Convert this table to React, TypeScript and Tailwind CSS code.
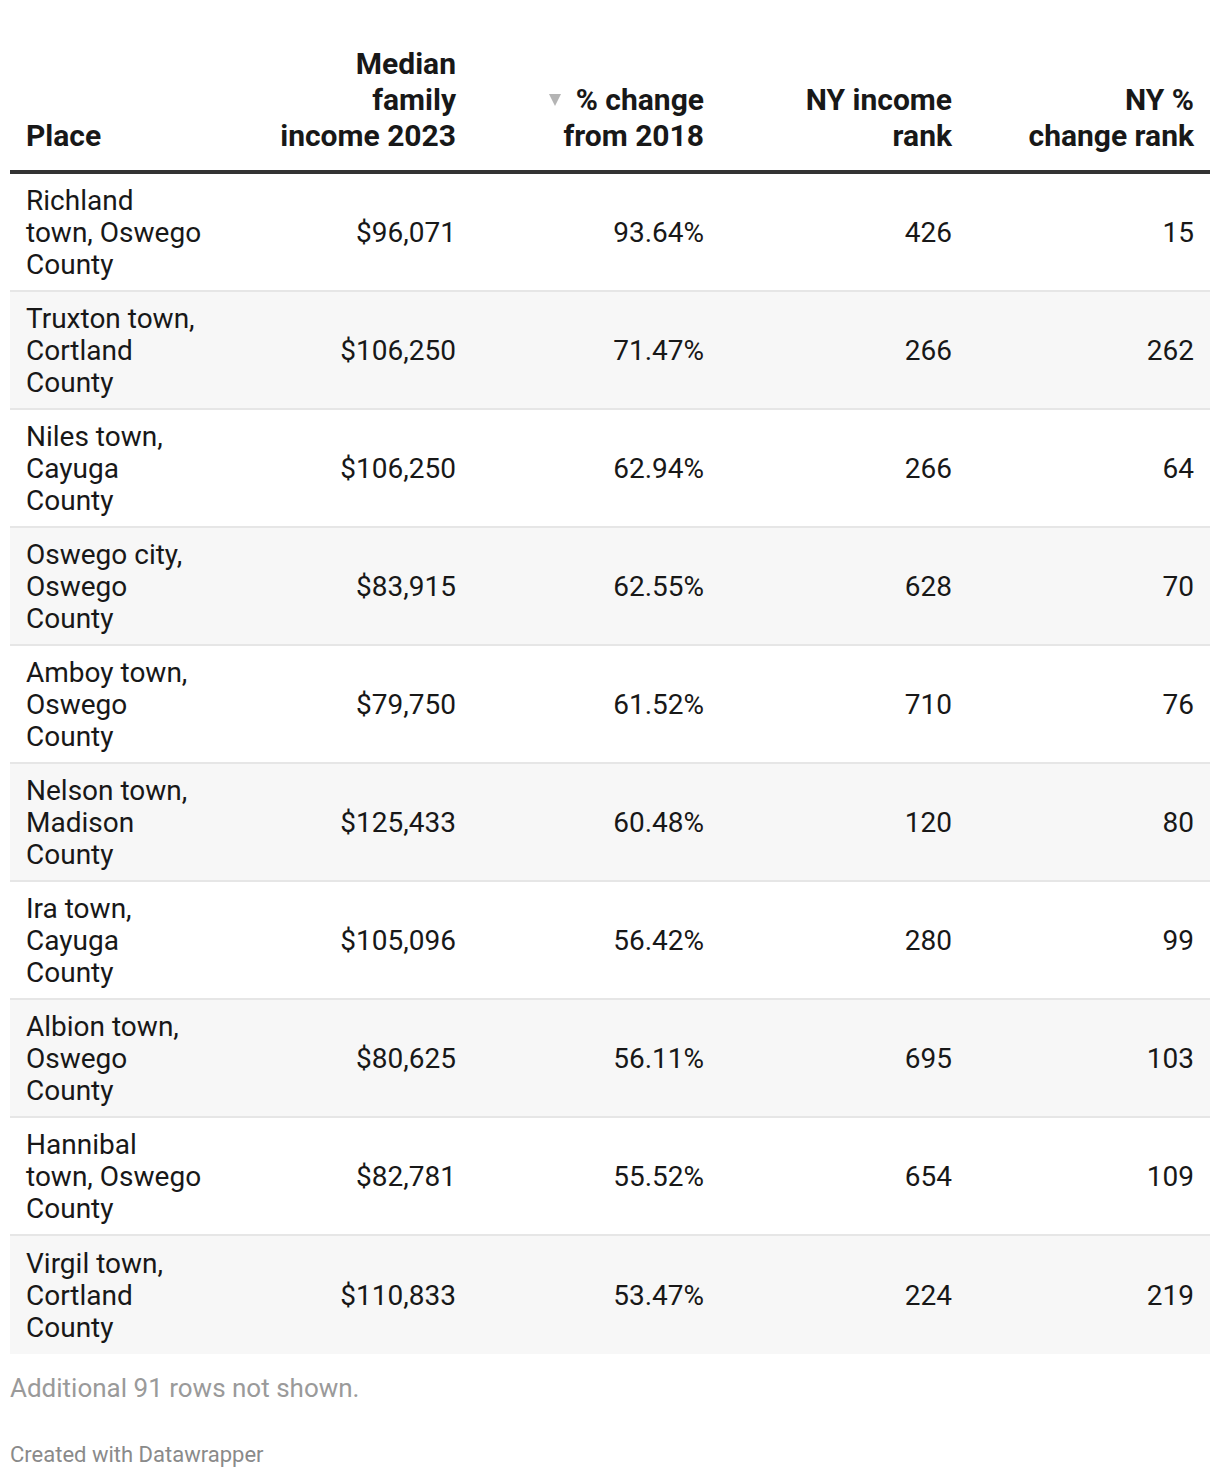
import React from "react";

const rows: { place: string[]; income: string; change: string; rank: string; crank: string }[] = [
  { place: ["Richland", "town, Oswego", "County"], income: "$96,071", change: "93.64%", rank: "426", crank: "15" },
  { place: ["Truxton town,", "Cortland", "County"], income: "$106,250", change: "71.47%", rank: "266", crank: "262" },
  { place: ["Niles town,", "Cayuga", "County"], income: "$106,250", change: "62.94%", rank: "266", crank: "64" },
  { place: ["Oswego city,", "Oswego", "County"], income: "$83,915", change: "62.55%", rank: "628", crank: "70" },
  { place: ["Amboy town,", "Oswego", "County"], income: "$79,750", change: "61.52%", rank: "710", crank: "76" },
  { place: ["Nelson town,", "Madison", "County"], income: "$125,433", change: "60.48%", rank: "120", crank: "80" },
  { place: ["Ira town,", "Cayuga", "County"], income: "$105,096", change: "56.42%", rank: "280", crank: "99" },
  { place: ["Albion town,", "Oswego", "County"], income: "$80,625", change: "56.11%", rank: "695", crank: "103" },
  { place: ["Hannibal", "town, Oswego", "County"], income: "$82,781", change: "55.52%", rank: "654", crank: "109" },
  { place: ["Virgil town,", "Cortland", "County"], income: "$110,833", change: "53.47%", rank: "224", crank: "219" },
];

const grid = "grid grid-cols-[212px_250px_248px_248px_242px]";

export default function App() {
  return (
    <div className="w-[1220px] bg-white px-[10px] text-[#181818]" style={{ fontFamily: "Roboto, 'Liberation Sans', sans-serif" }}>
      <div className={`${grid} items-end border-b-4 border-[#333333] pt-[46px] pb-[16px] text-[30px] font-bold leading-[36px]`}>
        <div className="whitespace-nowrap pl-[16px]">Place</div>
        <div className="whitespace-nowrap pr-[16px] text-right">
          <div>Median</div>
          <div>family</div>
          <div>income 2023</div>
        </div>
        <div className="whitespace-nowrap pr-[16px] text-right">
          <div className="flex items-center justify-end">
            <span className="mr-[15px] inline-block h-0 w-0 border-x-[6px] border-t-[12px] border-x-transparent border-t-[#b4b4b4]" />
            <span>% change</span>
          </div>
          <div>from 2018</div>
        </div>
        <div className="whitespace-nowrap pr-[16px] text-right">
          <div>NY income</div>
          <div>rank</div>
        </div>
        <div className="whitespace-nowrap pr-[16px] text-right">
          <div>NY %</div>
          <div>change rank</div>
        </div>
      </div>
      {rows.map((r, i) => (
        <div
          key={i}
          className={`${grid} h-[118px] items-center pt-[2px] text-[28px] leading-[32px] ${i % 2 === 1 ? "bg-[#f7f7f7]" : "bg-white"} ${i < rows.length - 1 ? "border-b-2 border-[#e6e6e6]" : ""}`}
        >
          <div className="whitespace-nowrap pl-[16px]">
            {r.place.map((p, j) => (
              <div key={j}>{p}</div>
            ))}
          </div>
          <div className="pr-[16px] text-right">{r.income}</div>
          <div className="pr-[16px] text-right">{r.change}</div>
          <div className="pr-[16px] text-right">{r.rank}</div>
          <div className="pr-[16px] text-right">{r.crank}</div>
        </div>
      ))}
      <div className="pt-[18px] text-[26px] leading-[32px] text-[#9a9a9a]">Additional 91 rows not shown.</div>
      <div className="pt-[37px] pb-[8px] text-[22px] leading-[28px] text-[#8a8a8a]">Created with Datawrapper</div>
    </div>
  );
}
